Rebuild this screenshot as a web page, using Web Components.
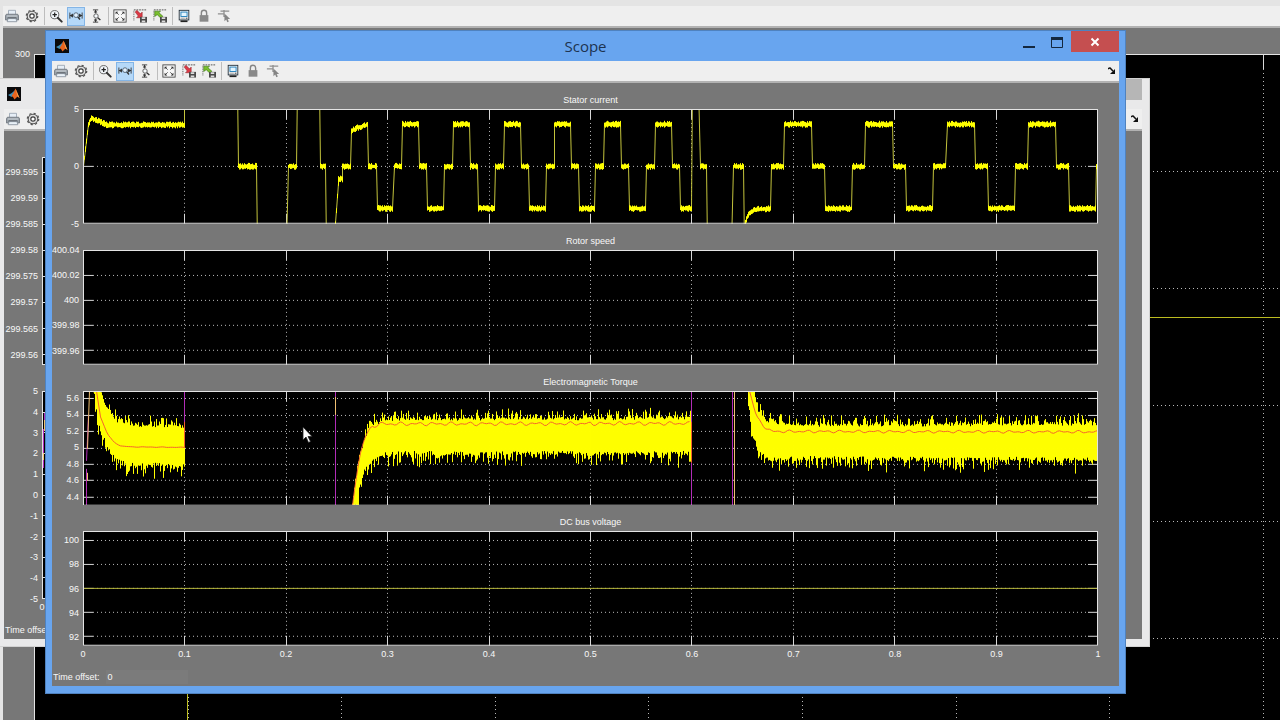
<!DOCTYPE html>
<html lang="en">
<head>
<meta charset="utf-8">
<title>Scope</title>
<style>
html, body {
    margin: 0;
    height: 100%;
    overflow: hidden;
    background: #000;
    font-family: "Liberation Sans", sans-serif;
}
</style>
</head>
<body>
<scope-desktop></scope-desktop>

<script>
const SVG_SIZE = 'xmlns="http://www.w3.org/2000/svg" viewBox="0 0 16 16" width="16" height="16"';

const ICONS = {
    print: `<path d="M4 6V1.500h8V6" fill="#e6eef6" stroke="#9aa6b2"/>
        <path d="M1.500 6h13l1 2v4.500h-15V8z" fill="#9aa2aa" stroke="#6e767e"/>
        <path d="M2 8h12" stroke="#d5dadf"/><path d="M3 10.500h10" stroke="#3c4248" stroke-width="1.500"/>
        <path d="M3.500 11h9l1 3.500h-11z" fill="#e9f1f8" stroke="#8a949e"/>`,
    gear: `<circle cx="8" cy="8" r="5.500" fill="none" stroke="#555" stroke-width="1.200"/>
        <circle cx="8" cy="8" r="6.500" fill="none" stroke="#555" stroke-width="1.500" stroke-dasharray="2.500 2.600"/>
        <circle cx="8" cy="8" r="4.500" fill="#ddd"/>
        <circle cx="8" cy="8" r="2.500" fill="#fff" stroke="#3c3c3c" stroke-width="1.300"/>`,
    zoomIn: `<circle cx="6.500" cy="6.500" r="4.700" fill="#f2f6fa" stroke="#555"/>
        <path d="M10 10l4.500 4.500" stroke="#333" stroke-width="2.200" stroke-linecap="round"/>
        <path d="M4 6.500h5M6.500 4v5" stroke="#222" stroke-width="1.400"/>`,
    zoomX: `<path d="M1 4v7M15 4v7M1 7.500h4M11 7.500h4" stroke="#333" fill="none"/>
        <path d="M1 7.500l3.500-2.500v5zM15 7.500l-3.500-2.500v5z" fill="#333"/>
        <circle cx="8" cy="7" r="2.700" fill="#e4f2ff" stroke="#4a5c6c"/>
        <path d="M10 9l2.500 3" stroke="#333" stroke-width="1.600"/>`,
    zoomY: `<path d="M4.500 1h6M4.500 15h6M7.500 1v4M7.500 11v4" stroke="#333" fill="none"/>
        <path d="M7.500 1L5.500 4h4zM7.500 15l-2-3h4z" fill="#333"/>
        <circle cx="8" cy="8" r="2.500" fill="#f5f9fc" stroke="#555"/>
        <path d="M10 10l3 2.500" stroke="#333" stroke-width="1.600"/>`,
    fit: `<rect x="1" y="1" width="14" height="14" fill="#f7f7f7" stroke="#444"/>
        <path d="M3 6V3h3zM10 3h3v3zM13 10v3h-3zM6 13H3v-3z" fill="#222"/>
        <path d="M4 4l2.500 2.500M12 4L9.500 6.500M4 12l2.500-2.500M12 12L9.500 9.500" stroke="#444"/>`,
    save: `<path d="M1 1h14" stroke="#444" stroke-dasharray="2 1"/><path d="M1 2v11" stroke="#444" stroke-dasharray="1 1"/>
        <path d="M2.500 3.500L4.500 1.500l4 4L10.500 3.500v6.500H4l2-2z" fill="#dc3a46" stroke="#8e1e27" stroke-width=".6"/>
        <path d="M8 9h8v6.500H8z" fill="#4a4a4a"/><path d="M10 9.500h4v2h-4zM10 13h4v2h-4z" fill="#dcdcdc"/>`,
    restore: `<path d="M1 1h14" stroke="#444" stroke-dasharray="2 1"/><path d="M1 2v11" stroke="#444" stroke-dasharray="1 1"/>
        <path d="M2 2.500h6.500L6.800 4.300l4.500 4-2.200 2.200-4.300-4L2 8.500z" fill="#7bc02e" stroke="#3c7414" stroke-width=".7"/>
        <path d="M8 9h8v6.500H8z" fill="#4a4a4a"/><path d="M10 9.500h4v2h-4zM10 13h4v2h-4z" fill="#dcdcdc"/>`,
    float: `<rect x="2.500" y="1.500" width="11" height="11" fill="#f5f5f5" stroke="#1e2c38"/>
        <rect x="4.500" y="3.500" width="7" height="5" fill="#e4f5ff" stroke="#1779b8"/>
        <path d="M4 10.500h5" stroke="#999"/><path d="M10 10.500h2" stroke="#222"/><path d="M4 14h8" stroke="#222" stroke-width="2"/>`,
    lock: `<path d="M5 8V4.500a3 3 0 0 1 6 0V8" fill="none" stroke="#858585" stroke-width="1.600"/>
        <rect x="3" y="7" width="10" height="7.500" fill="#898989"/>`,
    select: `<path d="M1 5.500h7M4 2.500h10M8 1v8M8 8.500h3" stroke="#909090" stroke-width="1.500" fill="none"/>
        <path d="M8.500 5v9l2-2 1.300 3 1.700-.8-1.300-2.700h2.800z" fill="#858585"/>`
};

const TOOL_GROUPS = [
    [['print', 'Print'], ['gear', 'Parameters']],
    [['zoomIn', 'Zoom'], ['zoomX', 'Zoom X-axis'], ['zoomY', 'Zoom Y-axis']],
    [['fit', 'Autoscale'], ['save', 'Save axes settings'], ['restore', 'Restore axes settings']],
    [['float', 'Floating scope'], ['lock', 'Lock axes selection'], ['select', 'Signal selection']]
];

// Small seeded generator, so the noise is the same on every load
function makeRandom(seed) {
    let s = seed;
    return () => {
        s = (s * 16807) % 2147483647;
        return s / 2147483647;
    };
}

function interpolate(points, x) {
    for (let i = 1; i < points.length; i++) {
        if (x <= points[i][0]) {
            const [x0, y0] = points[i - 1];
            const [x1, y1] = points[i];
            return y0 + (y1 - y0) * (x - x0) / (x1 - x0);
        }
    }
    return points[points.length - 1][1];
}

// Stator current: flat stretches [from, to, start value, end value], traces use a 1015 x 115 grid
function statorSegments() {
    const list = [
        [0, 5, 0, 3.7], [5, 8, 3.7, 4.25], [8, 13, 4.25, 4.05], [13, 22, 4.05, 3.7], [22, 101, 3.65, 3.65],
        [101, 154, 7, 7], [155, 173, 0, 0], [174, 203, -7, -7], [205, 213, 0, 0],
        [214, 236, 7, 7], [237, 242, 0, 0], [243, 251, -7, -7], [252, 255, -5, -1.5], [255, 259, -1.1, -1.1],
        [259, 267, 0, 0], [268, 272, 3.1, 3.3], [272, 284, 3.35, 3.65], [285, 293, 0, 0], [294, 309, -3.7, -3.7],
        [311, 318, 0, 0]
    ];
    for (let k = 0; k < 6; k++) {
        const x = Math.round(319 + 50.8 * k);
        list.push([x, x + 16, 3.7, 3.7], [x + 17, x + 24, 0, 0]);
        list.push([x + 25, k === 5 ? 609 : x + 41, -3.7, -3.7]);
        if (k < 5) {
            list.push([x + 42, x + 50, 0, 0]);
        }
    }
    list.push([610, 616, 7, 7], [618, 624, 0, 0], [625, 649, -7, -7], [651, 661, 0, 0],
        [662, 663, -7, -5.2], [663, 666, -4.9, -4.2], [666, 671, -4.2, -3.85], [671, 688, -3.8, -3.7], [689, 701, 0, 0]);
    for (let k = 0; k < 4; k++) {
        const x = Math.round(702.3 + 81.1 * k);
        list.push([x, x + 27, 3.7, 3.7], [x + 28, x + 40, 0, 0], [x + 41, x + 67, -3.7, -3.7]);
        list.push([x + 68, Math.min(x + 80, 1015), 0, 0]);
    }
    return list;
}

const TRACES = {
    stator() {
        const random = makeRandom(11);
        const y = v => 57.5 - v * 11.4;
        let line = '';
        let noise = '';
        statorSegments().forEach(([x0, x1, v0, v1], i) => {
            line += `${i ? 'L' : 'M'}${x0} ${y(v0)}L${x1} ${y(v1)}`;
            if (Math.abs(v0) > 6) return;
            for (let x = x0; x <= x1; x++) {
                const mid = y(v0 + (v1 - v0) * (x - x0) / (x1 - x0));
                noise += `M${x} ${mid - 1.5 - random() * 2}L${x} ${mid + 1.5 + random() * 2}`;
            }
        });
        return [[line, '#c4c43c'], [noise, '#ffff00']];
    },
    torque() {
        const bands = [
            { from: 10, to: 101, seed: 5,
                top: [[10, -12], [17, -5], [20, 8], [26, 20], [34, 29], [48, 33], [101, 34]],
                bottom: [[10, -2], [15, 34], [24, 57], [33, 71], [45, 76], [101, 76]] },
            { from: 269, to: 608, seed: 21,
                top: [[269, 112], [272, 88], [277, 62], [287, 33], [303, 27], [608, 26]],
                bottom: [[269, 120], [274, 116], [277, 93], [282, 80], [292, 68], [305, 64], [608, 64]] },
            { from: 666, to: 1015, seed: 33,
                top: [[666, -5], [671, -3], [675, 18], [685, 29], [715, 33], [1015, 32]],
                bottom: [[666, 8], [669, 42], [675, 59], [685, 69], [1015, 70]] }
        ];
        let yellow = '';
        bands.forEach(({ from, to, seed, top, bottom }) => {
            const random = makeRandom(seed);
            for (let x = from; x <= to; x++) {
                const up = interpolate(top, x) - Math.pow(random(), 3) * 10 - random() * 3 + 3;
                const down = interpolate(bottom, x) + Math.pow(random(), 3) * 13 + random() * 4 - 4;
                yellow += `M${x} ${up}L${x} ${down}`;
            }
        });

        const means = [
            [13, 101, [[13, 0], [17, 26], [24, 43], [30, 51], [37, 55], [47, 56], [101, 56.500]], .3],
            [269, 608, [[269, 116], [272, 90], [276, 66], [282, 45], [288, 36], [296, 33], [608, 32.500]], 2],
            [667, 1015, [[667, 0], [670, 11], [674, 26], [684, 38], [690, 40.500], [1015, 41]], 1.500]
        ];
        let red = '';
        means.forEach(([from, to, points, ripple]) => {
            for (let x = from; x <= to; x += 2) {
                const wave = Math.sin(x * .5) * Math.sin(x * .13 + 1) * ripple;
                red += `${x === from ? 'M' : 'L'}${x} ${interpolate(points, x) + wave}`;
            }
        });
        red += 'M101 31L101 57M609 31L609 72';

        return [
            [yellow, '#ffff00'],
            ['M3 115L3 78M3 70L5 24M101 0L101 31M252 0L252 115M609 0L609 31M609 72L609 115M650 0L650 115', '#b22cb8'],
            ['M4 90L4 82M4 58L6 0M252 6L252 24M652 115L652 0', '#f0c070'],
            [red, '#f5622c']
        ];
    },
    bus: () => [['M0 57.500L1015 57.500', '#b4b43a']],
    step: () => [['M101 115L101 43.200L1015 43.200', '#bcbc20']],
    start: () => [['M0 57L1 30L2 12', '#b02cc0'], ['M0 50L0 46M1 38L1 34M2 22L2 16', '#f0c070']]
};

class ScopePlot extends HTMLElement {
    constructor() {
        super();
        this.attachShadow({ mode: 'open' });
        this.shadowRoot.innerHTML = `
        <style>
            :host {
                flex: 1 0 26px;
                min-height: 0;
                display: grid;
                grid-template-columns: var(--label-width, 31px) 1fr var(--plot-margin, 21px);
                grid-template-rows: 26px 1fr auto;
                font-size: 9px;
                color: #f8f8f8;
            }
            /* the time labels come on top of the equal share */
            :host([times]) {
                flex-basis: 42px;
            }
            h2 {
                grid-column: 2;
                margin: 0;
                font-size: 9px;
                font-weight: normal;
                line-height: 14px;
                padding-top: 10px;
                text-align: center;
            }
            .values {
                grid-column: 1;
                grid-row: 2;
                display: flex;
                flex-direction: column;
                padding-right: 4px;
                text-align: right;
                white-space: nowrap;
            }
            .values span {
                height: 0;
                line-height: 0;
            }
            svg {
                grid-column: 2;
                grid-row: 2;
                display: block;
                width: 100%;
                height: 100%;
                min-height: 0;
                background: #000;
                shape-rendering: crispEdges;
                fill: none;
            }
            .times {
                grid-column: 2;
                grid-row: 3;
                display: flex;
                justify-content: space-between;
                height: 16px;
                line-height: 16px;
            }
            .times span {
                width: 0;
                display: flex;
                justify-content: center;
            }
            .times:empty {
                display: none;
            }
        </style>
        <h2><slot></slot></h2>
        <div class="values"></div>
        <svg xmlns="http://www.w3.org/2000/svg" preserveAspectRatio="none" aria-hidden="true"></svg>
        <div class="times"></div>`;
    }

    connectedCallback() {
        this._max = parseFloat(this.getAttribute('max'));
        this._min = parseFloat(this.getAttribute('min'));
        this._values = (this.getAttribute('values') || '').split(' ').filter(Boolean);
        this._grid = (this.getAttribute('grid') || this.getAttribute('values') || '').split(' ').map(Number);
        this._tick = parseInt(this.getAttribute('tick') || '10', 10);
        this.renderLabels();
        new ResizeObserver(() => this.draw()).observe(this.shadowRoot.querySelector('svg'));
        this.draw();
    }

    renderLabels() {
        // spacers grow with the distance between two values, labels have no height
        const spacer = part => `<i style="flex:${Math.round(part / (this._max - this._min) * 1000)} 0 0"></i>`;
        let last = this._max;
        const parts = this._values.map(v => {
            const space = spacer(last - v);
            last = Number(v);
            return `${space}<span>${v}</span>`;
        });
        parts.push(spacer(last - this._min));
        this.shadowRoot.querySelector('.values').innerHTML = parts.join('');

        const times = (this.getAttribute('times') || '').split(' ').filter(Boolean);
        this.shadowRoot.querySelector('.times').innerHTML = times.map(t => `<span>${t}</span>`).join('');
    }

    draw() {
        const svg = this.shadowRoot.querySelector('svg');
        const { width, height } = svg.getBoundingClientRect();
        const w = Math.round(width);
        const h = Math.round(height);
        if (!w || !h) return;
        svg.setAttribute('viewBox', `0 0 ${w} ${h}`);

        const tick = this._tick;
        let dots = '';
        let ticks = '';
        for (let i = 1; i < 10; i++) {
            const x = Math.round((w - 1) * i / 10) + .5;
            dots += `M${x} ${tick}V${h - tick}`;
            ticks += `M${x} 0V${tick}M${x} ${h - tick}V${h}`;
        }
        this._grid.forEach(v => {
            const y = Math.round((h - 1) * (this._max - v) / (this._max - this._min)) + .5;
            if (y < 1 || y > h - 1) return;
            dots += `M${tick} ${y}H${w - tick}`;
            ticks += `M0 ${y}H${tick}M${w - tick} ${y}H${w}`;
        });

        const sx = (w - 1) / 1015;
        const sy = h / 115;
        const place = d => d.replace(/([ML])(\S+) ([^ML]+)/g,
            (m, c, x, y) => `${c}${Math.round(x * sx) + .5} ${(y * sy).toFixed(1)}`);
        const name = this.getAttribute('trace');
        const traces = name ? TRACES[name]() : [];

        svg.innerHTML = `
            <path d="${dots}" stroke="#b9b9b9" stroke-dasharray="1 3"/>
            <path d="${ticks}" stroke="#d8d8d8"/>
            ${traces.map(([d, color]) => `<path d="${place(d)}" stroke="${color}"/>`).join('')}
            <rect x=".5" y=".5" width="${w - 1}" height="${h - 1}" stroke="#e4e4e4"/>`;
    }
}

class ScopeToolbar extends HTMLElement {
    constructor() {
        super();
        this.attachShadow({ mode: 'open' });
        const groups = TOOL_GROUPS.map(group => group.map(([icon, label]) => `
            <button type="button" aria-label="${label}"${icon === 'zoomX' ? ' aria-pressed="true"' : ''}>
                <svg ${SVG_SIZE}>${ICONS[icon]}</svg>
            </button>`).join('')).join('<i></i>');
        this.shadowRoot.innerHTML = `
        <style>
            :host {
                display: flex;
                align-items: center;
                gap: 2px;
                height: 22px;
                box-sizing: border-box;
                background: #efefef;
                border-bottom: 2px solid #b2b2b2;
            }
            button {
                flex: none;
                width: 18px;
                height: 19px;
                padding: 0;
                border: 0;
                background: none;
                display: flex;
                align-items: center;
                justify-content: center;
            }
            button svg {
                width: 14px;
                height: 14px;
            }
            button[aria-pressed] {
                background: #b5d8f8;
                box-shadow: inset 0 0 0 1px #84b5e6;
            }
            i {
                width: 1px;
                height: 18px;
                margin-left: 1px;
                background: #bdbdbd;
            }
            .dock {
                margin-left: auto;
                width: 14px;
            }
            .dock svg {
                width: 8px;
                height: 8px;
            }
        </style>
        ${groups}
        <button type="button" class="dock" aria-label="Dock">
            <svg viewBox="0 0 8 8" fill="none"><path d="M0 2q2-2 3 0l2 2" stroke="#111" stroke-width="1.500"/><path d="M7 2v5H2z" fill="#111"/></svg>
        </button>`;
    }
}

class ScopeWindow extends HTMLElement {
    constructor() {
        super();
        this.attachShadow({ mode: 'open' });
        this.shadowRoot.innerHTML = `
        <style>
            :host {
                display: flex;
                flex-direction: column;
                box-sizing: border-box;
                background: #e9e9ea;
                padding: 0 7px 7px 4px;
                border: solid #d2d2d2;
                border-width: 1px 1px 1px 0;
                --close: #b6b6b6;
            }
            :host([active]) {
                background: #68a5ef;
                padding: 0 6px 7px;
                border: 1px solid #4f82bf;
                --close: #c54f50;
            }
            :host([maximized]) {
                padding: 6px 0 3px 3px;
                border: 0;
                background: #e4e4e4;
            }
            header {
                display: flex;
                height: 30px;
                align-items: flex-start;
            }
            :host([maximized]) header {
                display: none;
            }
            .logo {
                flex: none;
                width: 14px;
                height: 14px;
                margin: 8px 0 0 3px;
            }
            h1 {
                flex: 1;
                margin: 0;
                padding-left: 87px;
                font: 15px/30px "Open Sans", "Noto Sans", sans-serif;
                text-align: center;
                color: #1d3350;
            }
            header button {
                width: 28px;
                height: 21px;
                padding: 0;
                border: 0;
                background: none;
                display: flex;
                align-items: center;
                justify-content: center;
            }
            header .close {
                width: 48px;
                background: var(--close);
            }
            :host(:not([active])) header .box, :host(:not([active])) .close svg {
                visibility: hidden;
            }
            :host(:not([active])) header .close {
                width: 20px;
            }
            main {
                flex: 1;
                min-height: 0;
                display: flex;
                flex-direction: column;
                background: #777;
            }
            footer {
                display: flex;
                align-items: flex-end;
                height: 22px;
                flex: none;
                padding: 0 0 2px 1px;
                gap: 6px;
                font-size: 9px;
                line-height: 14px;
                color: #f8f8f8;
                white-space: nowrap;
            }
            output {
                width: 80px;
                padding-left: 2px;
                background: #7b7b7b;
            }
        </style>
        <header>
            <svg class="logo" viewBox="0 0 14 14" aria-hidden="true">
                <rect width="14" height="14" fill="#0a0a0c"/>
                <path d="M1 8l3-1.500 2-1.500L8 3 6.500 8 4.500 10z" fill="#3d8fb8"/>
                <path d="M4.500 9L6.500 6l2-4.500L10 5l2.500 6-2-1.500L7.500 12.500l-1.500-2.500z" fill="#e8641e"/>
                <path d="M8.500 1.500L10 5l2.500 6-2-1.500z" fill="#f9a34c"/>
            </svg>
            <h1></h1>
            <button type="button" class="box" aria-label="Minimize"><svg width="14" height="14"><path d="M1 11h12v2H1z" fill="#14283f"/></svg></button>
            <button type="button" class="box" aria-label="Maximize"><svg width="14" height="14"><path d="M1.500 3.500h11v9h-11z" fill="none" stroke="#14283f"/><path d="M1 2h12v3H1z" fill="#14283f"/></svg></button>
            <button type="button" class="close" aria-label="Close"><svg width="10" height="10"><path d="M1.500 1.500l7 7M8.500 1.500l-7 7" stroke="#fff" stroke-width="2"/></svg></button>
        </header>
        <scope-toolbar></scope-toolbar>
        <main>
            <slot></slot>
            <footer><label for="offset">Time offset:</label><output id="offset"></output></footer>
        </main>`;
    }

    connectedCallback() {
        this.shadowRoot.querySelector('h1').textContent = this.getAttribute('heading') || '';
        this.shadowRoot.querySelector('output').textContent = this.getAttribute('offset') || '';
        if (this.hasAttribute('maximized')) {
            this.shadowRoot.querySelector('footer').remove();
        }
    }
}

class ScopeDesktop extends HTMLElement {
    constructor() {
        super();
        this.attachShadow({ mode: 'open' });
        this.shadowRoot.innerHTML = `
        <style>
            :host {
                display: block;
                position: relative;
                height: 100vh;
                overflow: hidden;
            }
            scope-window, .pointer {
                position: absolute;
            }
            .back {
                inset: 0 -311px -39px 0;
                --plot-margin: 20px;
            }
            .middle {
                inset: 78px 130px 73px 0;
                --label-width: 38px;
            }
            .front {
                inset: 30px 154px 26px 45px;
            }
            .pointer {
                left: 302px;
                top: 426px;
            }
        </style>
        <scope-window class="back" maximized>
            <scope-plot min="240" max="300" values="300" grid="290 280 270 260 250" tick="15" trace="step"></scope-plot>
        </scope-window>
        <scope-window class="middle">
            <scope-plot min="299.558" max="299.5979"
                values="299.595 299.59 299.585 299.58 299.575 299.57 299.565 299.56"></scope-plot>
            <scope-plot min="-5" max="5" values="5 4 3 2 1 0 -1 -2 -3 -4 -5" trace="start" times="0"></scope-plot>
        </scope-window>
        <scope-window class="front" active heading="Scope" offset="0">
            <scope-plot min="-5" max="5" values="5 0 -5" trace="stator">Stator current</scope-plot>
            <scope-plot min="399.949" max="400.04" values="400.04 400.02 400 399.98 399.96">Rotor speed</scope-plot>
            <scope-plot min="4.3" max="5.69" values="5.6 5.4 5.2 5 4.8 4.6 4.4" trace="torque">Electromagnetic Torque</scope-plot>
            <scope-plot min="91.25" max="100.75" values="100 98 96 94 92" trace="bus"
                times="0 0.1 0.2 0.3 0.4 0.5 0.6 0.7 0.8 0.9 1">DC bus voltage</scope-plot>
        </scope-window>
        <svg class="pointer" width="12" height="18" viewBox="0 0 12 18" aria-hidden="true">
            <path d="M1 1v13l3-3 2.500 5.500 2-1L6 10.500h4z" fill="#fff" stroke="#222" stroke-width=".8"/>
        </svg>`;
    }
}

customElements.define('scope-plot', ScopePlot);
customElements.define('scope-toolbar', ScopeToolbar);
customElements.define('scope-window', ScopeWindow);
customElements.define('scope-desktop', ScopeDesktop);
</script>
</body>
</html>
